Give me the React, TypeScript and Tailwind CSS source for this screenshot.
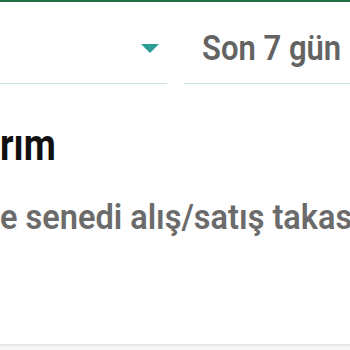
import React from 'react';

const App: React.FC = () => {
  return (
    <div className="w-[350px] h-[350px] overflow-hidden bg-white flex flex-col" style={{ fontFamily: 'Roboto, "Liberation Sans", sans-serif' }}>
      {/* top accent */}
      <div className="h-[2px] bg-[#1f6f43]" />

      {/* filter row */}
      <div className="flex gap-[17px] pt-[24px]">
        <div className="w-[167px] h-[58px] flex items-center justify-end pr-[8px] border-b border-[#cfe3e1]">
          <svg width="18" height="9" viewBox="0 0 18 9" className="-mt-[12px]">
            <path d="M0 0 L18 0 L9 9 Z" fill="#2a9d96" />
          </svg>
        </div>
        <div className="flex-1 h-[58px] flex items-center pl-[18px] border-b border-[#cfe3e1]">
          <span className="inline-block origin-bottom scale-y-[1.14] text-[31px] font-semibold text-[#636363] whitespace-nowrap leading-none -mt-[8px]">Son 7 gün</span>
        </div>
      </div>

      {/* title */}
      <div className="pt-[46px] whitespace-nowrap">
        <h2 className="inline-block origin-bottom scale-y-[1.2] text-[37px] font-bold text-[#111] leading-none">rım</h2>
      </div>

      {/* subtitle */}
      <div className="pt-[34px] whitespace-nowrap">
        <p className="inline-block origin-bottom scale-y-[1.08] text-[32.5px] font-semibold text-[#6b6b6b] leading-none">e senedi alış/satış takas</p>
      </div>

      <div className="flex-1" />
      <div className="h-[2px] bg-[#e6e6e6]" />
      <div className="h-[4px] bg-[#f7f7f7]" />
    </div>
  );
};

export default App;
